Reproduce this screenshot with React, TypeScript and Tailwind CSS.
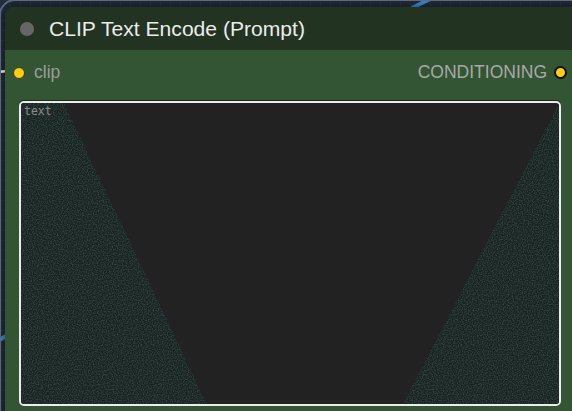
import React from "react";

function NoiseWedges() {
  return (
    <svg
      className="absolute inset-0 pointer-events-none"
      width="538"
      height="301"
      viewBox="0 0 538 301"
    >
      <defs>
        <filter id="grain" x="0" y="0" width="100%" height="100%">
          <feTurbulence type="fractalNoise" baseFrequency="0.8" numOctaves="1" seed="3" />
          <feColorMatrix
            type="matrix"
            values="0 0 0 0 0.15  0 0 0 0 0.24  0 0 0 0 0.23  0 0 0 1.8 -0.7"
          />
        </filter>
        <clipPath id="wedges">
          <polygon points="0,0 43,0 186,301 0,301" />
          <polygon points="538,0 538,301 382,301" />
        </clipPath>
      </defs>
      <g clipPath="url(#wedges)">
        <rect width="538" height="301" fill="#192322" />
        <rect width="538" height="301" filter="url(#grain)" opacity="0.5" />
      </g>
    </svg>
  );
}

export default function App() {
  return (
    <div
      className="relative w-[572px] h-[411px] overflow-hidden bg-[#1e2936] bg-[linear-gradient(to_right,#243040_1px,transparent_1px),linear-gradient(to_bottom,#243040_1px,transparent_1px)] bg-[size:10px_10px] pl-[5px] pt-[7px]"
      style={{ fontFamily: '"Liberation Sans", Arial, sans-serif' }}
    >
      {/* links running behind the node */}
      <svg className="absolute inset-0" width="572" height="411">
        <path d="M412 8 L432 -2" stroke="#3f7fc0" strokeWidth="4" fill="none" />
        <path d="M-4 72 L8 71" stroke="#e8e8e8" strokeWidth="2.5" fill="none" />
        <path d="M-4 342 L6 336" stroke="#3f7fc0" strokeWidth="4" fill="none" />
      </svg>

      {/* selection outline around the node corner */}
      <div className="absolute left-[-1px] top-[-1px] w-[600px] h-[440px] rounded-[16px] border-2 border-[#5d6b7c]" />

      <div className="relative w-[580px] h-[420px] rounded-[9px] overflow-hidden bg-[#335533] shadow-[0_0_6px_rgba(0,0,0,0.5)]">
        {/* title bar */}
        <div className="h-[43px] bg-[#223322] flex items-center pl-[15px] gap-[15px]">
          <div className="w-[14px] h-[14px] rounded-full bg-[#666666]" />
          <span className="text-[21.1px] leading-none text-[#ececec]">
            CLIP Text Encode (Prompt)
          </span>
        </div>

        {/* slots */}
        <div className="w-[572px] h-[31px] mt-[7px] flex items-center justify-between pl-[8px] pr-[10px]">
          <div className="flex items-center gap-[9px]">
            <div className="w-[12px] h-[12px] rounded-full bg-[#ffcc1a] border border-[#3a3a1a]" />
            <span className="text-[17.5px] leading-none text-[#9c9c9c]">clip</span>
          </div>
          <div className="flex items-center gap-[7px]">
            <span className="text-[17.5px] leading-none text-[#a8a8a8]">CONDITIONING</span>
            <div className="w-[13px] h-[13px] rounded-full bg-[#ffcc1a] border-2 border-[#111111]" />
          </div>
        </div>

        {/* prompt text area */}
        <div className="ml-[14px] mt-[13px] w-[542px] h-[305px] rounded-[5px] border-2 border-[#ececec] bg-[#222222] relative overflow-hidden shadow-[0_-1px_0_#1a2a1a]">
          <NoiseWedges />
          <span
            className="absolute left-[3px] top-[3px] text-[11.5px] leading-none text-[#8a8a8a]"
            style={{ fontFamily: '"DejaVu Sans Mono", "Liberation Mono", monospace' }}
          >
            text
          </span>
        </div>
      </div>
    </div>
  );
}
